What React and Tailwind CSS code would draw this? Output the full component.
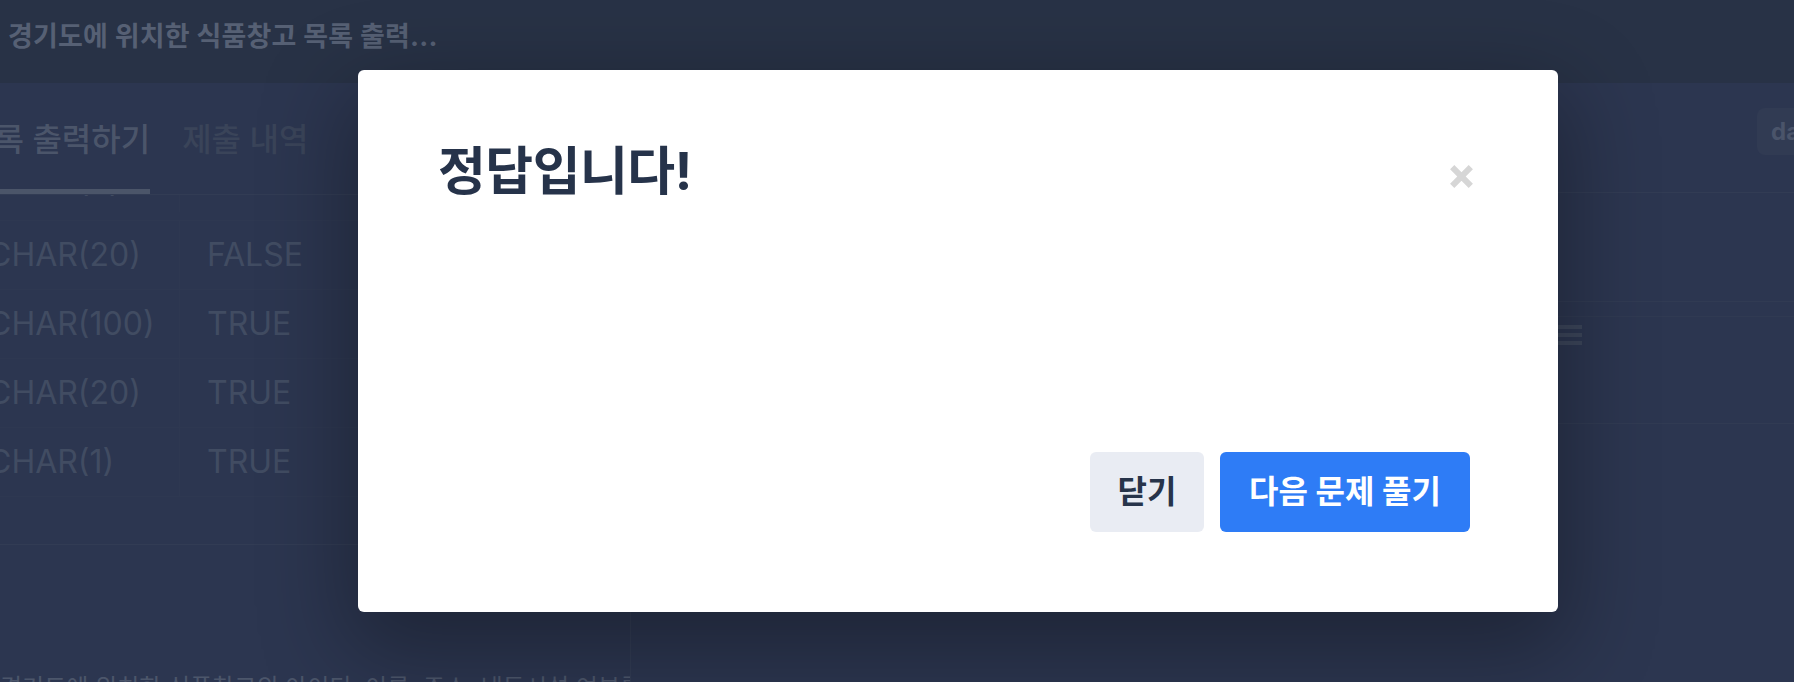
import React from "react";

function XIcon() {
  return (
    <svg width="25" height="25" viewBox="0 0 25 25" aria-hidden="true">
      <path d="M3.2 3.2 L21.8 21.8 M21.8 3.2 L3.2 21.8" stroke="#d6d6d6" strokeWidth="6" fill="none" />
    </svg>
  );
}

const rows = [
  { type: "CHAR(5)", nullable: "", partial: true },
  { type: "CHAR(20)", nullable: "FALSE" },
  { type: "CHAR(100)", nullable: "TRUE" },
  { type: "CHAR(20)", nullable: "TRUE" },
  { type: "CHAR(1)", nullable: "TRUE" },
];

export default function App() {
  return (
    <div className="relative w-full h-[682px] overflow-hidden bg-[#2c3650] font-[family-name:Inter,'Noto_Sans_CJK_KR',sans-serif]">
      {/* header */}
      <div className="h-[83px] bg-[#283246] pl-[8px] pt-[23px]">
        <div className="text-[27px] leading-[27px] font-bold text-[#566074] whitespace-nowrap tracking-[0.2px]">
          경기도에 위치한 식품창고 목록 출력...
        </div>
      </div>

      {/* body */}
      <div className="flex h-[599px]">
        {/* left panel */}
        <div className="w-[631px] shrink-0 border-r border-[#323c54] flex flex-col overflow-hidden">
          <div className="h-[112px] shrink-0 border-b border-[#323c54] flex items-end -ml-[35px] gap-[32px] whitespace-nowrap">
            <div className="border-b-[5px] border-[#4b5569] pb-[33px] text-[32px] leading-[32px] font-medium text-[#4b556a]">
              목록 출력하기
            </div>
            <div className="pb-[38px] text-[32px] leading-[32px] font-medium text-[#3a4459]">제출 내역</div>
          </div>

          <div className="h-[302px] shrink-0 overflow-hidden">
            <div className="-mt-[43px]">
              {rows.map((r, i) => (
                <div
                  key={i}
                  className={
                    r.partial
                      ? "h-[69px] flex items-stretch border-b border-[#2e3851] pb-[8px]"
                      : "h-[69px] flex items-stretch border-b border-[#2e3851]"
                  }
                >
                  <div className="w-[192px] -ml-[12px] shrink-0 border-r border-[#2e3851] flex items-center">
                    <span className="text-[32px] leading-[32px] text-[#414c62] whitespace-nowrap">{r.type}</span>
                  </div>
                  <div className="pl-[27px] flex items-center">
                    <span className="text-[32px] leading-[32px] text-[#414c62]">{r.nullable}</span>
                  </div>
                </div>
              ))}
            </div>
          </div>

          <div className="h-[48px] shrink-0 border-b border-[#323c54]" />
          <div className="pt-[131px] whitespace-nowrap text-[24px] leading-[24px] text-[#4c566b]">
            경기도에 위치한 식품창고의 아이디, 이름, 주소, 냉동시설 여부를 조회하는 SQL문을 작성해주세요.
          </div>
        </div>

        {/* right panel */}
        <div className="flex-1 min-w-0 flex flex-col overflow-hidden">
          <div className="h-[110px] shrink-0 border-b border-[#323c54] pt-[25px] flex">
            <div className="ml-[1126px] shrink-0 h-[47px] w-[140px] rounded-[8px] bg-[#313b53] pl-[14px] flex items-center text-[24px] font-bold text-[#4a546a]">
              database
            </div>
          </div>
          <div className="h-[109px] shrink-0 border-b border-[#313b53]" />
          <div className="h-[15px] shrink-0 border-b border-[#303a52]" />
          <div className="h-[107px] shrink-0 border-b border-[#313b53] pt-[8px]">
            <div className="ml-[919px] w-[32px] flex flex-col gap-[4px]">
              <div className="h-[4px] bg-[#3c465b]" />
              <div className="h-[4px] bg-[#3c465b]" />
              <div className="h-[4px] bg-[#3c465b]" />
            </div>
          </div>
        </div>
      </div>

      {/* modal overlay */}
      <div className="absolute inset-0 flex items-center pl-[358px]">
        <div className="w-[1200px] h-[542px] bg-white rounded-[6px] flex flex-col pt-[76px] pb-[80px] pl-[80px] pr-[84px] shadow-[0_30px_90px_10px_rgba(0,0,0,0.32)]">
          <div className="flex justify-between items-start">
            <h2 className="text-[52px] leading-[52px] font-bold text-[#26334a] tracking-[-0.5px]">정답입니다!</h2>
            <button className="mt-[18px] w-[25px] h-[25px] flex items-center justify-center">
              <XIcon />
            </button>
          </div>
          <div className="mt-auto flex justify-end gap-4 pr-[4px]">
            <button className="h-[80px] w-[114px] flex items-center justify-center rounded-[6px] bg-[#e9ecf3] text-[32px] font-bold text-[#27344a]">
              닫기
            </button>
            <button className="h-[80px] w-[250px] flex items-center justify-center rounded-[6px] bg-[#2e7cf6] text-[32px] font-bold text-white whitespace-nowrap">
              다음 문제 풀기
            </button>
          </div>
        </div>
      </div>
    </div>
  );
}
